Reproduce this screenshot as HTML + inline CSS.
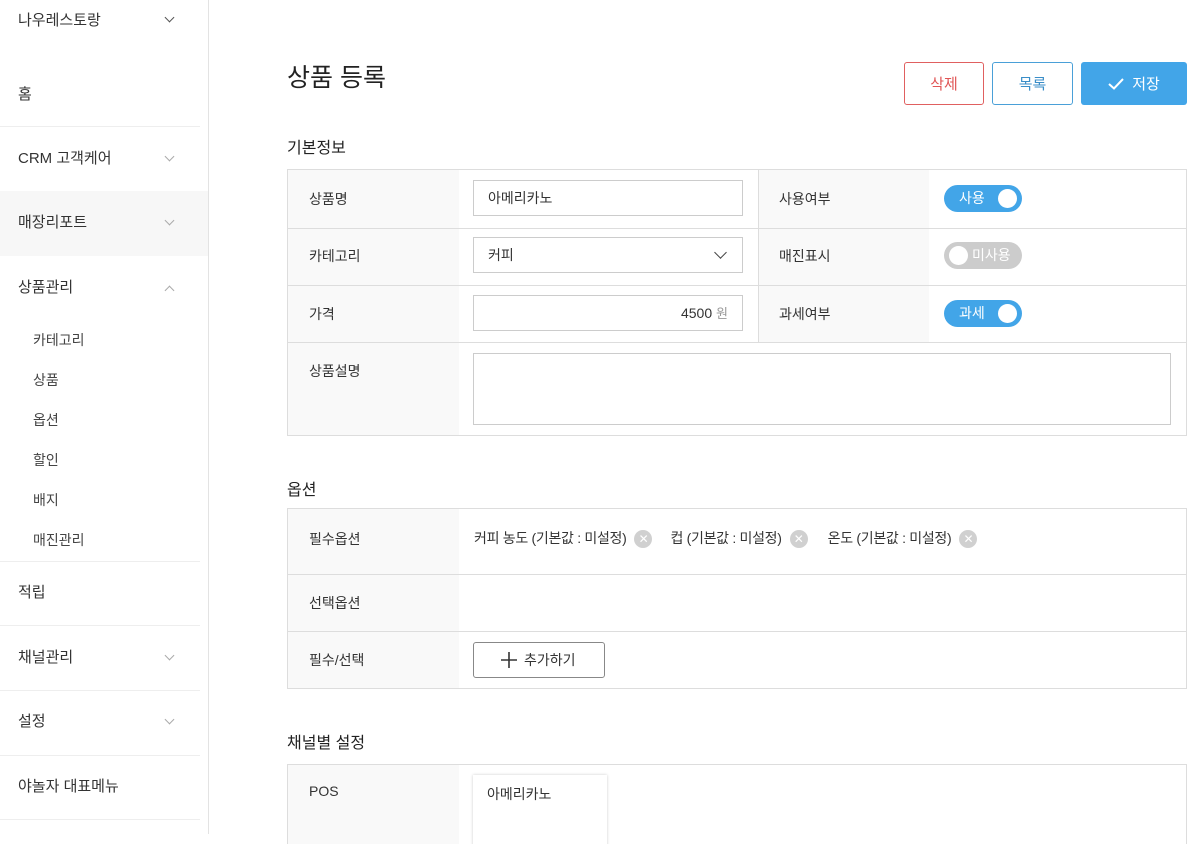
<html><head><style>
*{box-sizing:border-box;margin:0;padding:0}
body{width:1198px;height:834px;overflow:hidden;background:#fff;font-family:"Liberation Sans","Noto Sans CJK KR",sans-serif;color:#333;position:relative}
.a{position:absolute}
.side{left:0;top:0;width:209px;height:834px;border-right:1px solid #e3e3e3}
.si{position:absolute;left:18px;font-size:15px;color:#333;line-height:20px}
.sub{position:absolute;left:33px;font-size:14px;color:#444;line-height:20px}
.dv{position:absolute;left:0;width:200px;height:1px;background:#eee}
.chev{position:absolute;left:166px;width:7px;height:7px;border-right:1px solid #888;border-bottom:1px solid #888;transform:rotate(45deg)}
.btn{position:absolute;top:62px;height:43px;border-radius:3px;font-size:15px;display:flex;align-items:center;justify-content:center}
.tb{position:absolute;left:287px;width:900px;border:1px solid #ddd;border-bottom:none;overflow:hidden}
.row{position:relative;border-bottom:1px solid #ddd;display:flex}
.lb{width:171px;background:#f9f9f9;font-size:14px;padding-left:21px;color:#333}
.inp{position:absolute;border:1px solid #ccc;height:36px;font-size:14px;padding-left:14px;line-height:34px;color:#333}
.tg{position:absolute;left:656px;width:78px;height:27px;border-radius:14px;background:#42a5e8;color:#fff;font-size:14px;line-height:27px}
.tg i{position:absolute;top:4px;width:19px;height:19px;border-radius:50%;background:#fff}
.h2{position:absolute;left:287px;font-size:16px;color:#222}
.x{display:inline-block;width:18px;height:18px;border-radius:50%;background:#d0d0d0;color:#fff;font-size:12px;line-height:18px;text-align:center;vertical-align:middle;margin-left:8px;font-style:normal}
</style></head><body>
<div class="a side">
<div class="si" style="top:11px">나우레스토랑</div><div class="chev" style="top:14px;border-color:#555"></div>
<div class="si" style="top:85px">홈</div>
<div class="dv" style="top:126px"></div>
<div class="si" style="top:149px">CRM 고객케어</div><div class="chev" style="top:153px;border-color:#aaa"></div>
<div class="a" style="left:0;top:191px;width:208px;height:65px;background:#f7f7f7"></div>
<div class="si" style="top:213px">매장리포트</div><div class="chev" style="top:217px;border-color:#aaa"></div>
<div class="si" style="top:278px">상품관리</div><div class="chev" style="top:287px;border-color:#aaa;transform:rotate(225deg)"></div>
<div class="sub" style="top:330px">카테고리</div>
<div class="sub" style="top:370px">상품</div>
<div class="sub" style="top:410px">옵션</div>
<div class="sub" style="top:450px">할인</div>
<div class="sub" style="top:490px">배지</div>
<div class="sub" style="top:530px">매진관리</div>
<div class="dv" style="top:561px"></div>
<div class="si" style="top:583px">적립</div>
<div class="dv" style="top:625px"></div>
<div class="si" style="top:648px">채널관리</div><div class="chev" style="top:652px;border-color:#aaa"></div>
<div class="dv" style="top:690px"></div>
<div class="si" style="top:712px">설정</div><div class="chev" style="top:716px;border-color:#aaa"></div>
<div class="dv" style="top:755px"></div>
<div class="si" style="top:777px">야놀자 대표메뉴</div>
<div class="dv" style="top:819px"></div>
</div>

<div class="a" style="left:287px;top:58px;font-size:25px;color:#222">상품 등록</div>
<div class="btn" style="left:904px;width:80px;border:1px solid #e06060;color:#e05555">삭제</div>
<div class="btn" style="left:992px;width:81px;border:1px solid #4aa0d8;color:#3a8ec8">목록</div>
<div class="btn" style="left:1081px;width:106px;background:#42a5e8;color:#fff"><svg width="16" height="12" viewBox="0 0 16 12" style="margin-right:8px"><path d="M1 6l5 4.5L15 1" stroke="#fff" stroke-width="2" fill="none"/></svg>저장</div>

<div class="h2" style="top:134px">기본정보</div>
<div class="tb" style="top:169px">
<div class="row" style="height:59px"><div class="lb" style="padding-top:19px">상품명</div><div class="lb" style="position:absolute;left:470px;top:0;bottom:0;padding-top:19px">사용여부</div></div>
<div class="row" style="height:57px"><div class="lb" style="padding-top:17px">카테고리</div><div class="lb" style="position:absolute;left:470px;top:0;bottom:0;padding-top:17px">매진표시</div></div>
<div class="row" style="height:57px"><div class="lb" style="padding-top:18px">가격</div><div class="lb" style="position:absolute;left:470px;top:0;bottom:0;padding-top:18px">과세여부</div></div>
<div class="row" style="height:93px"><div class="lb" style="padding-top:18px">상품설명</div></div>
<div class="a" style="left:470px;top:0;width:1px;height:173px;background:#ddd"></div>
<div class="inp" style="left:185px;top:10px;width:270px">아메리카노</div>
<div class="inp" style="left:185px;top:67px;width:270px">커피<span class="a" style="left:242px;top:10px;width:9px;height:9px;border-right:1.5px solid #444;border-bottom:1.5px solid #444;transform:rotate(45deg)"></span></div>
<div class="inp" style="left:185px;top:125px;width:270px;text-align:right;padding-right:14px">4500 <span style="color:#999;font-size:13px">원</span></div>
<div class="a" style="left:185px;top:183px;width:698px;height:72px;border:1px solid #ccc"></div>
<div class="tg" style="top:15px"><span style="margin-left:15px">사용</span><i style="left:54px"></i></div>
<div class="tg" style="top:72px;background:#ccc"><i style="left:5px"></i><span style="margin-left:28px">미사용</span></div>
<div class="tg" style="top:130px"><span style="margin-left:15px">과세</span><i style="left:54px"></i></div>
</div>

<div class="h2" style="top:476px">옵션</div>
<div class="tb" style="top:508px">
<div class="row" style="height:66px"><div class="lb" style="padding-top:20px">필수옵션</div>
<div style="font-size:14px;padding:19px 0 0 15px;letter-spacing:-0.3px">커피 농도 (기본값 : 미설정)<i class="x">✕</i><span style="margin-left:18px">컵 (기본값 : 미설정)</span><i class="x">✕</i><span style="margin-left:20px">온도 (기본값 : 미설정)</span><i class="x">✕</i></div></div>
<div class="row" style="height:57px"><div class="lb" style="padding-top:18px">선택옵션</div></div>
<div class="row" style="height:57px"><div class="lb" style="padding-top:18px">필수/선택</div>
<div class="a" style="left:185px;top:10px;width:132px;height:36px;border:1px solid #888;border-radius:3px;font-size:14px;line-height:34px;padding-left:50px">추가하기<span class="a" style="left:27px;top:9px;width:16px;height:16px"><svg width="16" height="16"><path d="M8 0v16M0 8h16" stroke="#333" stroke-width="1.6"/></svg></span></div></div>
</div>

<div class="h2" style="top:729px">채널별 설정</div>
<div class="tb" style="top:764px;height:80px">
<div class="lb" style="height:80px;padding-top:18px">POS</div>
<div class="a" style="left:185px;top:10px;width:134px;height:80px;background:#fff;box-shadow:0 0 3px rgba(0,0,0,.2);font-size:14px;padding:9px 0 0 14px">아메리카노</div>
</div>
</body></html>
